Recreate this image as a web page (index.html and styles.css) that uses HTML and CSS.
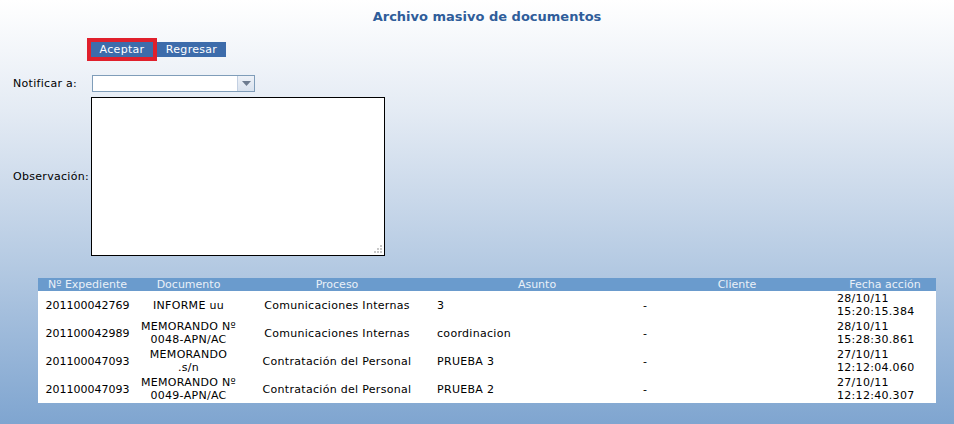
FILE: index.html
```html
<!DOCTYPE html>
<html lang="es">
<head>
<meta charset="utf-8">
<title>Archivo masivo de documentos</title>
<link rel="stylesheet" href="styles.css">
</head>
<body>
<div class="page">
  <h1 class="title">Archivo masivo de documentos</h1>
  <div class="actions">
    <button class="btn btn-focus" type="button">Aceptar</button>
    <button class="btn btn-back" type="button">Regresar</button>
  </div>
  <div class="form">
    <label class="label">Notificar a:</label>
    <div class="select">
      <span class="select-value"></span>
      <span class="select-arrow">
        <svg width="9" height="5" viewBox="0 0 9 5"><path d="M0 0H9L4.5 5Z" fill="#6d7b8f"/></svg>
      </span>
    </div>
    <label class="label label-mid">Observación:</label>
    <div class="textarea">
      <svg class="grip" width="10" height="10" viewBox="0 0 10 10">
        <rect x="7" y="1" width="2" height="2" fill="#c8c8c8"/>
        <rect x="4" y="4" width="2" height="2" fill="#c8c8c8"/>
        <rect x="7" y="4" width="2" height="2" fill="#c8c8c8"/>
        <rect x="1" y="7" width="2" height="2" fill="#c8c8c8"/>
        <rect x="4" y="7" width="2" height="2" fill="#c8c8c8"/>
        <rect x="7" y="7" width="2" height="2" fill="#c8c8c8"/>
      </svg>
    </div>
  </div>
  <table class="grid">
    <colgroup>
      <col class="c1"><col class="c2"><col class="c3"><col class="c4"><col class="c5"><col class="c6">
    </colgroup>
    <thead>
      <tr>
        <th>Nº Expediente</th>
        <th>Documento</th>
        <th>Proceso</th>
        <th>Asunto</th>
        <th>Cliente</th>
        <th>Fecha acción</th>
      </tr>
    </thead>
    <tbody>
      <tr>
        <td class="ctr num">201100042769</td>
        <td class="ctr">INFORME uu</td>
        <td class="ctr">Comunicaciones Internas</td>
        <td class="lft">3</td>
        <td class="lft">-</td>
        <td class="lft">28/10/11<br>15:20:15.384</td>
      </tr>
      <tr>
        <td class="ctr num">201100042989</td>
        <td class="ctr">MEMORANDO Nº<br>0048-APN/AC</td>
        <td class="ctr">Comunicaciones Internas</td>
        <td class="lft">coordinacion</td>
        <td class="lft">-</td>
        <td class="lft">28/10/11<br>15:28:30.861</td>
      </tr>
      <tr>
        <td class="ctr num">201100047093</td>
        <td class="ctr">MEMORANDO<br>.s/n</td>
        <td class="ctr">Contratación del Personal</td>
        <td class="lft">PRUEBA 3</td>
        <td class="lft">-</td>
        <td class="lft">27/10/11<br>12:12:04.060</td>
      </tr>
      <tr>
        <td class="ctr num">201100047093</td>
        <td class="ctr">MEMORANDO Nº<br>0049-APN/AC</td>
        <td class="ctr">Contratación del Personal</td>
        <td class="lft">PRUEBA 2</td>
        <td class="lft">-</td>
        <td class="lft">27/10/11<br>12:12:40.307</td>
      </tr>
    </tbody>
  </table>
</div>
</body>
</html>
```
FILE: styles.css
```css
html, body {
  margin: 0;
  padding: 0;
  height: 100%;
}
body {
  font-family: Verdana, "DejaVu Sans", sans-serif;
  font-size: 11px;
  letter-spacing: 0.3px;
  color: #000;
  background: linear-gradient(to bottom, #ffffff 0px, #f3f6fa 50px, #e4ebf4 110px, #c9d8ea 200px, #b6cbe3 260px, #a5bfdd 310px, #7fa5d0 424px);
  min-height: 424px;
}
.page {
  width: 954px;
  height: 424px;
  overflow: hidden;
}
.title {
  margin: 0;
  padding-top: 9px;
  font-size: 13px;
  line-height: 16px;
  font-weight: bold;
  letter-spacing: 0;
  color: #2f5d9a;
  text-align: center;
  padding-left: 20px;
}
.actions {
  display: flex;
  margin-top: 17px;
  padding-left: 91px;
}
.btn {
  font-family: inherit;
  font-size: 11px;
  letter-spacing: 0.3px;
  line-height: 15px;
  height: 15px;
  padding: 0;
  border: 0;
  margin: 0;
  background: #3d6cab;
  color: #ffffff;
  cursor: pointer;
  text-align: center;
}
.btn-focus {
  width: 62px;
  box-shadow: 0 0 0 4px #e0202c;
  margin-right: 4px;
}
.btn-back {
  width: 69px;
}
.form {
  display: grid;
  grid-template-columns: 78px auto;
  row-gap: 5px;
  margin-top: 18px;
  padding-left: 13px;
  align-items: center;
  justify-items: start;
}
.label {
  line-height: 13px;
  white-space: nowrap;
}
.select {
  display: flex;
  width: 161px;
  height: 15px;
  margin-left: 1px;
  border: 1px solid #7f9db9;
  background: #ffffff;
}
.select-value {
  flex: 1;
}
.select-arrow {
  width: 16px;
  display: flex;
  align-items: center;
  justify-content: center;
  background: linear-gradient(to bottom, #eef2f8, #d9e2ee);
  border-left: 1px solid #c3d0e2;
}
.textarea {
  width: 292px;
  height: 157px;
  border: 1px solid #000;
  background: #fff;
  display: flex;
  align-items: flex-end;
  justify-content: flex-end;
}
.grip {
  margin: 0 1px 1px 0;
}
.grid {
  margin-top: 22px;
  margin-left: 38px;
  width: 898px;
  border-collapse: collapse;
  table-layout: fixed;
  background: #ffffff;
}
.c1 { width: 99px; }
.c2 { width: 103px; }
.c3 { width: 194px; }
.c4 { width: 206px; }
.c5 { width: 194px; }
.c6 { width: 102px; }
.grid th {
  background: #6a9bcd;
  color: #e9f0f8;
  font-weight: normal;
  letter-spacing: 0;
  height: 13px;
  line-height: 13px;
  padding: 0;
  text-align: center;
  white-space: nowrap;
}
.grid td {
  height: 28px;
  line-height: 13px;
  padding: 0 3px;
  vertical-align: middle;
  white-space: nowrap;
}
.grid td.num {
  letter-spacing: 0;
}
.ctr { text-align: center; }
.lft { text-align: left; }
```
